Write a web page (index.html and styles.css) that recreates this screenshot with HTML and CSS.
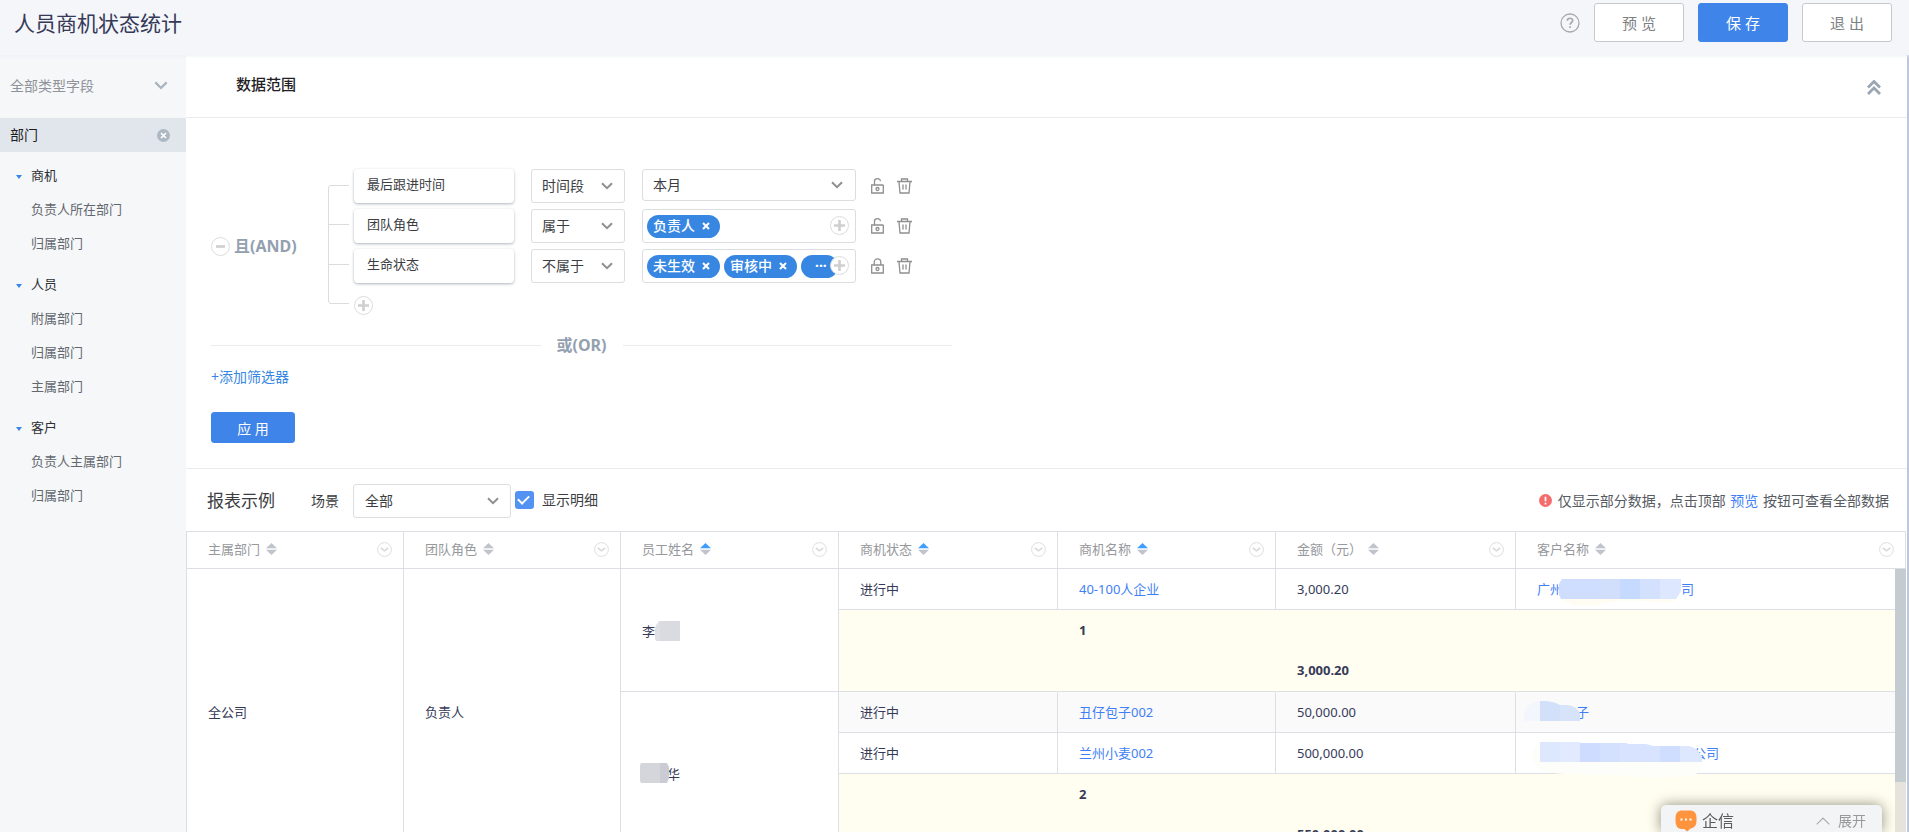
FILE: index.html
```html
<!DOCTYPE html>
<html lang="zh-CN">
<head>
<meta charset="utf-8">
<title>人员商机状态统计</title>
<link rel="stylesheet" href="styles.css">
</head>
<body>
<svg class="defs" aria-hidden="true">
  <symbol id="chev" viewBox="0 0 12 8"><path d="M1 1.200 6 6.200 11 1.200" fill="none" stroke="currentColor" stroke-width="2"/></symbol>
  <symbol id="plus" viewBox="0 0 19 19"><circle cx="9.500" cy="9.500" r="9" fill="#fff" stroke="#dcdcdc"/><path d="M9.500 4v11M4 9.500h11" stroke="#cfcfcf" stroke-width="2.600" fill="none"/></symbol>
  <symbol id="unlock" viewBox="0 0 13 16"><g fill="none" stroke="currentColor" stroke-width="1.300"><path d="M12.300 7v8H.7V7h11.600"/><path d="M3.500 7V4a3 3 0 0 1 6-.8"/><circle cx="6.500" cy="11" r="1.500"/></g></symbol>
  <symbol id="lock" viewBox="0 0 13 16"><g fill="none" stroke="currentColor" stroke-width="1.300"><path d="M.7 7h11.600v8H.7z"/><path d="M3.200 7V4.200a3.300 3.300 0 0 1 6.600 0V7"/><circle cx="6.500" cy="11" r="1.500"/></g></symbol>
  <symbol id="trash" viewBox="0 0 15 16"><g fill="none" stroke="currentColor" stroke-width="1.300"><path d="M0 3.500h15M4.500 3V1h6v2M2 4l1 11h9l1-11M6 6.500v5M9 6.500v5"/></g></symbol>
  <symbol id="cross" viewBox="0 0 8 8"><path d="M1 1l6 6M7 1 1 7" stroke="currentColor" stroke-width="2" fill="none"/></symbol>
  <symbol id="sort" viewBox="0 0 11 12"><path class="up" d="M5.500 0 11 5.200H0z"/><path class="down" d="M5.500 12 11 6.800H0z"/></symbol>
  <symbol id="more" viewBox="0 0 15 15"><circle cx="7.500" cy="7.500" r="6.900" fill="#fff" stroke="#dedede"/><path d="M3.800 6l3.700 2.800L11.200 6" fill="none" stroke="#dadada" stroke-width="1.600"/></symbol>
</svg>

<header class="topbar">
  <h1 class="topbar-title">人员商机状态统计</h1>
  <button class="icon-btn help" aria-label="帮助"><svg width="20" height="20" viewBox="0 0 20 20"><circle cx="10" cy="10" r="9" fill="none" stroke="#a6a9ad" stroke-width="1.300"/><path d="M7.300 7.800c0-3.400 5.400-3.300 5.400-.2 0 1.900-2.600 2-2.600 4.200M10.100 13.300v1.700" fill="none" stroke="#a6a9ad" stroke-width="1.700"/></svg></button>
  <button class="btn">预 览</button>
  <button class="btn btn-primary">保 存</button>
  <button class="btn">退 出</button>
</header>

<div class="body">
  <aside class="sidebar">
    <label class="pick side-type"><select aria-label="字段类型"><option>全部类型字段</option></select><svg width="14" height="9"><use href="#chev"/></svg></label>
    <div class="side-search">
      <input type="text" value="部门" aria-label="搜索字段">
      <button class="icon-btn" aria-label="清除"><svg width="13" height="13" viewBox="0 0 13 13"><circle cx="6.500" cy="6.500" r="6.500" fill="#aeb8c3"/><path d="M4 4l5 5M9 4 4 9" stroke="#fff" stroke-width="1.700"/></svg></button>
    </div>
    <nav class="tree">
      <section><h2>商机</h2><ul><li>负责人所在部门</li><li>归属部门</li></ul></section>
      <section><h2>人员</h2><ul><li>附属部门</li><li>归属部门</li><li>主属部门</li></ul></section>
      <section><h2>客户</h2><ul><li>负责人主属部门</li><li>归属部门</li></ul></section>
    </nav>
  </aside>

  <main class="main">
    <div class="range-head">
      <h2>数据范围</h2>
      <button class="icon-btn fold" aria-label="收起"><svg width="14" height="15" viewBox="0 0 14 15"><path d="M1 7.500l6-6 6 6M1 14l6-6 6 6" fill="none" stroke="currentColor" stroke-width="2.800"/></svg></button>
    </div>

    <section class="filters">
      <div class="and-block">
        <div class="and-label">
          <button class="icon-btn" aria-label="移除条件组"><svg width="19" height="19" viewBox="0 0 19 19"><circle cx="9.500" cy="9.500" r="9" fill="#fff" stroke="#dcdcdc"/><path d="M5 9.500h9" stroke="#cfcfcf" stroke-width="2.600"/></svg></button>
          <strong>且(AND)</strong>
        </div>
        <svg class="bracket" width="21" height="119" viewBox="0 0 21 119"><path d="M21 .5H3Q.5.500.5 3v113q0 2.500 2.500 2.500h18M.5 39.500H21M.5 79.500H21" fill="none" stroke="#dcdcdc"/></svg>
        <div class="rules">
          <div class="rule">
            <div class="field">最后跟进时间</div>
            <label class="pick op"><select aria-label="运算符"><option>时间段</option></select><svg width="12" height="8"><use href="#chev"/></svg></label>
            <label class="pick value value-date"><select aria-label="值"><option>本月</option></select><svg width="12" height="8"><use href="#chev"/></svg></label>
            <button class="icon-btn lock" aria-label="锁定"><svg width="13" height="16"><use href="#unlock"/></svg></button>
            <button class="icon-btn" aria-label="删除"><svg width="15" height="16"><use href="#trash"/></svg></button>
          </div>
          <div class="rule">
            <div class="field">团队角色</div>
            <label class="pick op"><select aria-label="运算符"><option>属于</option></select><svg width="12" height="8"><use href="#chev"/></svg></label>
            <div class="value tags">
              <span class="tag">负责人<svg width="8" height="8"><use href="#cross"/></svg></span>
              <button class="icon-btn add" aria-label="添加"><svg width="19" height="19"><use href="#plus"/></svg></button>
            </div>
            <button class="icon-btn lock" aria-label="锁定"><svg width="13" height="16"><use href="#unlock"/></svg></button>
            <button class="icon-btn" aria-label="删除"><svg width="15" height="16"><use href="#trash"/></svg></button>
          </div>
          <div class="rule">
            <div class="field">生命状态</div>
            <label class="pick op"><select aria-label="运算符"><option>不属于</option></select><svg width="12" height="8"><use href="#chev"/></svg></label>
            <div class="value tags">
              <span class="tag">未生效<svg width="8" height="8"><use href="#cross"/></svg></span>
              <span class="tag">审核中<svg width="8" height="8"><use href="#cross"/></svg></span>
              <span class="tag tag-more">···</span>
              <button class="icon-btn add" aria-label="添加"><svg width="19" height="19"><use href="#plus"/></svg></button>
            </div>
            <button class="icon-btn lock" aria-label="解锁"><svg width="13" height="16"><use href="#lock"/></svg></button>
            <button class="icon-btn" aria-label="删除"><svg width="15" height="16"><use href="#trash"/></svg></button>
          </div>
          <button class="icon-btn add-rule" aria-label="添加条件"><svg width="19" height="19"><use href="#plus"/></svg></button>
        </div>
      </div>
      <div class="or-line"><strong>或(OR)</strong></div>
      <a class="add-filter" href="#">+添加筛选器</a>
      <button class="btn btn-primary apply">应 用</button>
    </section>

    <section class="report">
      <div class="report-bar">
        <h2>报表示例</h2>
        <label class="scene-label" for="scene">场景</label>
        <div class="pick scene"><select id="scene"><option>全部</option></select><svg width="12" height="8"><use href="#chev"/></svg></div>
        <div class="detail">
          <input class="check" type="checkbox" id="detail" checked>
          <label for="detail">显示明细</label>
        </div>
        <p class="notice"><svg width="13" height="13" viewBox="0 0 13 13"><circle cx="6.500" cy="6.500" r="6.500" fill="#f56c6c"/><path d="M6.500 2.800v4.400M6.500 8.700v1.700" stroke="#fff" stroke-width="1.700"/></svg>仅显示部分数据，点击顶部 <a href="#">预览</a> 按钮可查看全部数据</p>
      </div>

      <div class="grid-wrap">
        <table class="grid">
          <colgroup><col class="c-dept"><col class="c-dept"><col class="c-name"><col class="c-state"><col class="c-name"><col class="c-amount"><col></colgroup>
          <thead>
            <tr>
              <th><div class="th">主属部门<button class="icon-btn sort" aria-label="排序"><svg width="11" height="12"><use href="#sort"/></svg></button><button class="icon-btn more" aria-label="更多"><svg width="15" height="15"><use href="#more"/></svg></button></div></th>
              <th><div class="th">团队角色<button class="icon-btn sort" aria-label="排序"><svg width="11" height="12"><use href="#sort"/></svg></button><button class="icon-btn more" aria-label="更多"><svg width="15" height="15"><use href="#more"/></svg></button></div></th>
              <th><div class="th">员工姓名<button class="icon-btn sort asc" aria-label="升序"><svg width="11" height="12"><use href="#sort"/></svg></button><button class="icon-btn more" aria-label="更多"><svg width="15" height="15"><use href="#more"/></svg></button></div></th>
              <th><div class="th">商机状态<button class="icon-btn sort asc" aria-label="升序"><svg width="11" height="12"><use href="#sort"/></svg></button><button class="icon-btn more" aria-label="更多"><svg width="15" height="15"><use href="#more"/></svg></button></div></th>
              <th><div class="th">商机名称<button class="icon-btn sort asc" aria-label="升序"><svg width="11" height="12"><use href="#sort"/></svg></button><button class="icon-btn more" aria-label="更多"><svg width="15" height="15"><use href="#more"/></svg></button></div></th>
              <th><div class="th">金额（元）<button class="icon-btn sort" aria-label="排序"><svg width="11" height="12"><use href="#sort"/></svg></button><button class="icon-btn more" aria-label="更多"><svg width="15" height="15"><use href="#more"/></svg></button></div></th>
              <th><div class="th">客户名称<button class="icon-btn sort" aria-label="排序"><svg width="11" height="12"><use href="#sort"/></svg></button><button class="icon-btn more" aria-label="更多"><svg width="15" height="15"><use href="#more"/></svg></button></div></th>
            </tr>
          </thead>
          <tbody>
            <tr>
              <td rowspan="5">全公司</td>
              <td rowspan="5">负责人</td>
              <td rowspan="2"><span class="masked">李<svg width="25" height="20" viewBox="0 0 25 20"><path d="M4 0h1v20H1L0 18V6z" fill="#dfe0e6"/><path d="M5 0h20v20H5z" fill="#dadbe1"/></svg></span></td>
              <td>进行中</td>
              <td><a href="#">40-100人企业</a></td>
              <td>3,000.20</td>
              <td><a class="masked" href="#">广州<svg class="mask-a" width="122" height="24" viewBox="0 0 122 24"><path d="M2 22h117q-6 5-22 3-30-3-50 1-26 7-43-2z" fill="#fffdf3"/><path d="M3 2h58v20H2l-2-4V7z" fill="#cfdeff"/><path d="M41 2h20v20H41z" fill="#d1dffc"/><path d="M61 2h20v20H61z" fill="#c6d9fe"/><path d="M81 2h20v20H81z" fill="#d3e1ff"/><path d="M101 2h21v12l-5 8h-16z" fill="#dde7ff"/></svg>司</a></td>
            </tr>
            <tr class="sum">
              <td></td><td><b>1</b></td><td class="second"><b>3,000.20</b></td><td></td>
            </tr>
            <tr class="alt">
              <td rowspan="3" class="plain"><span class="masked"><svg class="mask-b" width="29" height="22" viewBox="0 0 29 22"><path d="M1 0h19v20H1L0 18V2z" fill="#d5d6dc"/><path d="M20 0h7l2 4v11l-2 5h-7z" fill="#cbccd3"/></svg>华</span></td>
              <td>进行中</td>
              <td><a href="#">丑仔包子002</a></td>
              <td>50,000.00</td>
              <td><a class="masked" href="#"><svg class="mask-c" width="58" height="22" viewBox="0 0 58 22"><path d="M0 20V13Q4 0 16 0v20z" fill="#f3f6fd"/><path d="M16 0h7q8 1 13 4v16H16z" fill="#d2e0fa"/><path d="M36 4h8q8 1 12 8v8H36z" fill="#d7e3fb"/></svg>子</a></td>
            </tr>
            <tr>
              <td>进行中</td>
              <td><a href="#">兰州小麦002</a></td>
              <td>500,000.00</td>
              <td><a class="masked" href="#"><svg class="mask-d" width="170" height="22" viewBox="0 0 170 22"><path d="M6 0Q0 5 0 12q0 13 12 18 30 4 75 3 22 4 70 1 12-2 12-14z" fill="#fdfefa"/><path d="M7 0h27l1 1h12v19H7z" fill="#dde8ff"/><path d="M27 0h20v20H27z" fill="#e1eaff"/><path d="M47 1h20v19H47z" fill="#cddcff"/><path d="M67 1h20v19H67z" fill="#d3e1fe"/><path d="M87 1h7l1 1h18l7 2h7v16H87z" fill="#d8e4ff"/><path d="M127 4h20v16h-20z" fill="#cfdeff"/><path d="M147 4h9q10 2 13 12v4h-22z" fill="#dde8ff"/></svg>公司</a></td>
            </tr>
            <tr class="sum">
              <td></td><td><b>2</b></td><td class="second"><b>550,000.00</b></td><td></td>
            </tr>
          </tbody>
        </table>
        <div class="scroll"><div class="thumb"></div></div>
      </div>
    </section>
  </main>
</div>

<div class="chat">
  <svg width="22" height="22" viewBox="0 0 22 22"><path d="M6 .5h10Q21.500 1 21.500 8v3q0 6-5.500 7.500-1 .2-1.500 1L12 21.500 9.500 19H6Q.5 18 .5 11V8Q.5 1 6 .5z" fill="#ff943e"/><path d="M5.500 9.500h2M10 9.500h2M14.500 9.500h2" stroke="#fff" stroke-width="2"/></svg>
  <span class="chat-name">企信</span>
  <button class="chat-open"><svg width="14" height="8" viewBox="0 0 14 8"><path d="M.7 7.300 7 1l6.300 6.300" fill="none" stroke="#aaa" stroke-width="1.200"/></svg>展开</button>
</div>
</body>
</html>
```

FILE: styles.css
```css
* { box-sizing: border-box; }

body {
  margin: 0;
  height: 100vh;
  display: flex;
  flex-direction: column;
  overflow: hidden;
  background: #fff;
  color: #3b3d42;
  font: 14px/20px "Noto Sans", "Noto Sans CJK SC", sans-serif;
}

h1, h2, p, ul { margin: 0; padding: 0; font-weight: 400; }
ul { list-style: none; }
a { color: #3f7ff5; text-decoration: none; }
svg { display: block; flex: none; }
.defs { position: absolute; width: 0; height: 0; }

button, input, select { font: inherit; color: inherit; }

.icon-btn {
  display: inline-flex;
  padding: 0;
  border: 0;
  background: none;
  color: #8f8f8f;
}

.btn {
  width: 90px;
  height: 39px;
  padding: 0;
  border: 1px solid #c8c9cc;
  border-radius: 3px;
  background: #fff;
  color: #7d7f83;
  font-size: 15px;
}

.btn-primary {
  border-color: #3f84e9;
  background: #3f84e9;
  color: #fff;
}

/* Top bar */
.topbar {
  flex: none;
  display: flex;
  align-items: flex-start;
  gap: 14px;
  height: 55px;
  padding: 3px 17px 0 14px;
  background: #f4f6fa;
  box-shadow: 0 1px 3px #eceff4;
  z-index: 1;
}

.topbar-title {
  flex: 1;
  color: #363a58;
  font-size: 21px;
  line-height: 40px;
}

.help { margin-top: 10px; }

.body { flex: 1; display: flex; min-height: 0; }

/* Drop-downs */
.pick {
  display: grid;
  align-items: center;
  border: 1px solid #dcdde0;
  border-radius: 3px;
  background: #fff;
  color: #8f8f8f;
}

.pick > * { grid-area: 1 / 1; }
.pick > svg { justify-self: end; margin-right: 11px; pointer-events: none; }

.pick select {
  width: 100%;
  height: 100%;
  padding: 0 24px 0 10px;
  border: 0;
  background: none;
  color: #3b3d42;
  appearance: none;
}

/* Sidebar */
.sidebar { flex: none; width: 186px; background: #f5f7f9; }

.side-type { height: 63px; padding-bottom: 2px; border: 0; background: none; color: #a9b4bf; }
.pick.side-type select { color: #8f9298; }
.side-type > svg { margin-right: 18px; }

.side-search {
  display: flex;
  align-items: center;
  height: 34px;
  padding: 0 16px 0 10px;
  background: #e1e5ec;
}

.side-search input {
  flex: 1;
  min-width: 0;
  padding: 0;
  border: 0;
  background: none;
  color: #1c1e22;
}

.tree { padding-top: 6px; font-size: 13px; line-height: 34px; color: #63676e; }
.tree section { padding: 0 0 7px 31px; }

.tree h2 {
  display: flex;
  align-items: center;
  margin-left: -15px;
  font-size: 13px;
  color: #2e3035;
}

.tree h2::before {
  content: "";
  margin: 4px 9px 0 0;
  border: 3px solid transparent;
  border-top: 4px solid #3787e6;
  border-bottom: 0;
}

/* Data range */
.main {
  flex: 1;
  min-width: 0;
  border-right: 2px solid #bfc8da;
}

.range-head {
  display: flex;
  align-items: center;
  justify-content: space-between;
  height: 63px;
  padding: 0 26px 4px 50px;
  border-bottom: 1px solid #e9ebee;
}

.range-head h2 { font-size: 15px; font-weight: 500; color: #1f2126; }
.fold { margin-top: 6px; color: #9aa6b1; }

.filters {
  padding: 51px 25px 25px;
  border-bottom: 1px solid #e9ebee;
}

.and-block { display: flex; align-items: flex-start; }

.and-label {
  display: flex;
  align-self: center;
  align-items: center;
  gap: 4px;
  width: 117px;
  padding-top: 8px;
}

.and-label strong, .or-line strong { font-size: 16px; color: #93a0b0; }

.bracket { margin: 16px 5px 0 0; }

.rules { display: flex; flex-direction: column; gap: 6px; }
.rule { display: flex; align-items: flex-start; height: 34px; }

.field {
  width: 160px;
  height: 34px;
  margin-right: 17px;
  padding-left: 13px;
  border-radius: 4px;
  background: #fff;
  box-shadow: 0 1px 3px #aeb3ba;
  font-size: 13px;
  line-height: 31px;
}

.op { width: 94px; height: 34px; margin-right: 17px; }
.value { width: 214px; margin-right: 15px; }
.value-date { height: 32px; }
.value-date > svg { margin-right: 12px; }
.rule > .icon-btn { margin-top: 9px; }
.rule > .lock { margin-right: 13px; }

.tags {
  position: relative;
  display: flex;
  align-items: center;
  gap: 4px;
  height: 34px;
  padding-left: 4px;
  border: 1px solid #dcdde0;
  border-radius: 3px;
}

.tag {
  display: flex;
  align-items: center;
  gap: 7px;
  height: 23px;
  padding: 0 10px 0 6px;
  border-radius: 12px;
  background: #3787e2;
  color: #fff;
  font-weight: 500;
}

.tag-more { width: 37px; padding-left: 14px; font-weight: 700; }
.add { position: absolute; top: 6px; right: 6px; }
.add-rule { align-self: flex-start; margin-top: 7px; }

.or-line {
  display: flex;
  align-items: center;
  gap: 16px;
  width: 741px;
  max-width: 100%;
  margin: 19px 0 11px;
  line-height: 22px;
}

.or-line::before, .or-line::after {
  content: "";
  flex: 1;
  height: 1px;
  background: #e9ebee;
}

.add-filter { display: block; width: fit-content; color: #3787e2; }
.apply { width: 84px; height: 31px; margin-top: 25px; padding-top: 2px; display: block; font-size: 14px; }

/* Report */
.report-bar {
  display: flex;
  align-items: center;
  height: 62px;
  padding: 1px 18px 0 21px;
}

.report-bar h2 { font-size: 17px; line-height: 24px; margin-right: 36px; }
.scene-label { margin-right: 14px; }
.scene { width: 158px; height: 34px; margin-right: 4px; }
.scene select { padding-left: 11px; }

.detail { display: flex; align-items: center; padding-bottom: 2px; }

.check {
  width: 19px;
  height: 18px;
  margin: 0 8px 0 0;
  border-radius: 3px;
  appearance: none;
  background: #5292f2;
  display: grid;
  place-items: center;
}

.check:checked::before {
  content: "";
  width: 9px;
  height: 5px;
  margin: 0 2px 3px 0;
  border: solid #fff;
  border-width: 0 0 2px 2px;
  transform: rotate(-45deg);
}

.notice { margin-left: auto; color: #565a62; white-space: nowrap; }
.notice svg { display: inline-block; margin-right: 6px; vertical-align: -1px; }
.notice a { margin: 0 1px; }

.grid-wrap { position: relative; margin-right: 1px; }

.grid {
  width: 100%;
  table-layout: fixed;
  border-collapse: separate;
  border-spacing: 0;
  border-top: 1px solid #dcdfe4;
  border-right: 1px solid #dcdfe4;
  font-size: 13px;
  color: #363a58;
}

.c-dept { width: 217px; }
.c-name { width: 218px; }
.c-state { width: 219px; }
.c-amount { width: 240px; }

.grid th, .grid td {
  height: 41px;
  padding: 0 0 0 21px;
  border: solid #dcdfe4;
  border-width: 0 0 1px 1px;
  text-align: left;
}

.grid th { height: 37px; padding-bottom: 2px; font-weight: 400; color: #96989c; }

.th { display: flex; align-items: center; padding-right: 11px; }
.sort { margin-left: 6px; fill: #c0c4cc; --up: #c0c4cc; }
.sort.asc { --up: #409eff; }
.up { fill: var(--up); }
.more { margin-left: auto; }

.grid .alt td { background: #fafafb; }
.grid .alt .plain { background: #fff; }

.grid .sum td {
  height: 82px;
  padding-top: 10px;
  border-left-color: #fffef0;
  background: #fffef0;
  vertical-align: top;
}

.grid .sum td:first-child { border-left-color: #dcdfe4; }
.grid .sum .second { padding-top: 50px; }

.masked { display: inline-flex; align-items: center; vertical-align: middle; }
.masked svg { position: relative; overflow: visible; }
.mask-a { margin-left: -4px; }
.mask-b { margin: 0 -2px; }
.mask-c { margin: 0 -6px 0 -13px; }
.mask-d { margin: 0 -10px 0 -4px; }

.scroll {
  position: absolute;
  top: 38px;
  right: 0;
  bottom: 0;
  width: 11px;
  background: #e5e3db;
}

.thumb { height: 213px; background: #c4cbd1; }

/* Chat dock */
.chat {
  position: fixed;
  right: 27px;
  bottom: 0;
  z-index: 2;
  display: flex;
  align-items: center;
  width: 221px;
  height: 27px;
  padding: 5px 16px 0 14px;
  border-radius: 5px 5px 0 0;
  background: #f3f4f6;
  box-shadow: 0 0 14px #8d8d7c;
  color: #5c5c5c;
}

.chat-name { margin: 0 auto 0 5px; font-size: 16px; }

.chat-open {
  display: flex;
  align-items: center;
  gap: 8px;
  padding: 0;
  border: 0;
  background: none;
  color: #999;
}
```
